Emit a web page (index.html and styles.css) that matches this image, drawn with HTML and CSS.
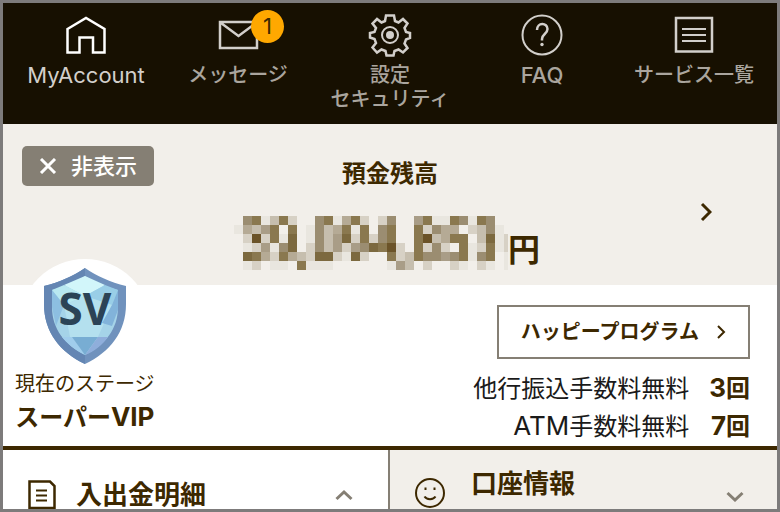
FILE: index.html
```html
<!DOCTYPE html>
<html lang="ja">
<head>
<meta charset="utf-8">
<meta name="viewport" content="width=device-width, initial-scale=1">
<title>MyAccount</title>
<link rel="stylesheet" href="styles.css">
</head>
<body>
<nav class="nav">
  <a class="nav-item current" href="#">
    <svg class="nav-icon" viewBox="0 0 44 44"><path d="M3.500 16 22 5l18.500 11v23.500H29V24.500H15.500v15h-12z" stroke-width="2.500"/></svg>
    <span class="nav-label latin">MyAccount</span>
  </a>
  <a class="nav-item" href="#">
    <svg class="nav-icon" viewBox="0 0 44 44"><path d="M4 9h37v26H4zM5 10l17.500 13L40 10" stroke-width="2.500"/></svg>
    <span class="badge">1</span>
    <span class="nav-label">メッセージ</span>
  </a>
  <a class="nav-item" href="#">
    <svg class="nav-icon" viewBox="0 0 44 44">
      <path d="M18 2.500h8l1 5.500 3.500 1.500 4.500-3.500 4.500 4.500-3 4.500 1.500 4 4 1v5l-4 1.500-1.500 4 3 4.500-4.500 4.500-4.500-3-4 1.500-1 4.500h-7l-1-4.500-4-1.500-4.500 3L4.500 34.500l3.500-4.500-1.500-4-4.500-1.500V20l4.500-1L8 15l-3.500-4.500L9 6l4.500 3.500L17 8z" stroke-width="2.500"/>
      <circle cx="22" cy="22" r="8"/><circle class="solid" cx="22" cy="22" r="4"/>
    </svg>
    <span class="nav-label">設定<br>セキュリティ</span>
  </a>
  <a class="nav-item" href="#">
    <svg class="nav-icon" viewBox="0 0 44 44">
      <circle cx="22" cy="22" r="19.500"/><path d="M17 17c0-8 10.500-7.500 10.500-1 0 5-5.500 5-5.500 10v1.500" stroke-width="2.500"/><circle class="solid" cx="22" cy="31.500" r="1.700"/>
    </svg>
    <span class="nav-label latin">FAQ</span>
  </a>
  <a class="nav-item" href="#">
    <svg class="nav-icon" viewBox="0 0 44 44"><path d="M4 5h36v33.500H4z" stroke-width="2.500"/><path d="M10 16h24M10 22h24M10 28h24"/></svg>
    <span class="nav-label">サービス一覧</span>
  </a>
</nav>

<section class="balance">
  <button class="hide" type="button">
    <svg viewBox="0 0 18 16" width="18" height="16"><path d="M2 1l14 14M16 1 2 15"/></svg>
    非表示
  </button>
  <div class="balance-body">
    <h2 class="balance-title">預金残高</h2>
    <p class="amount"><svg id="mosaic" class="mosaic" viewBox="0 0 274 54"></svg><span class="yen">円</span></p>
  </div>
  <a class="more" href="#" aria-label="預金残高">
    <svg viewBox="0 0 12 20" width="12" height="20"><path d="M2 2l8 8-8 8"/></svg>
  </a>
</section>

<section class="stage">
  <div class="rank">
    <svg class="emblem" viewBox="0 0 132 110">
      <circle cx="66" cy="66" r="66" fill="#fff"/>
      <path d="M66 9c12 8 25 14 41 18v18c0 28-16 48-41 60C41 93 25 73 25 45V27C41 23 54 17 66 9z" fill="#7092bd"/>
      <path d="M66 9v96C41 93 25 73 25 45V27C41 23 54 17 66 9z" fill="#6486b3"/>
      <path d="M66 17c10 7 21 11 33 14v17c0 22-13 38-33 48-20-10-33-26-33-48V31c12-3 23-7 33-14z" fill="#a5d3e8"/>
      <path d="M66 17 86 26 66 37 45 26z" fill="#d2f6fa"/>
      <path d="M33 31l12-5 21 11-21 9z" fill="#b9e8f0"/>
      <path d="M86 26l13 5-6 15-27-9z" fill="#99cee7"/>
      <path d="M33 31l12 15-8 21-4-19z" fill="#8dbfe1"/>
      <path d="M45 46l21-9 27 9-14 32H51z" fill="#b4e0ee"/>
      <path d="M99 31v20l-6 16-10-3 10-18z" fill="#82b3da"/>
      <path d="M43 78h10l13 18c-10-5-17-11-23-18z" fill="#a0cdec"/>
      <path d="M53 78h26L66 96z" fill="#78add3"/>
      <path d="M79 78h10c-6 8-13 14-23 18z" fill="#8faedb"/>
      <text x="66" y="66">SV</text>
    </svg>
    <p class="rank-label">現在のステージ</p>
    <p class="rank-name">スーパー<span class="latin">VIP</span></p>
  </div>
  <div class="perks">
    <a class="program" href="#">ハッピープログラム
      <svg viewBox="0 0 10 16" width="10" height="16"><path d="M2 2l6 6-6 6"/></svg>
    </a>
    <dl class="fees">
      <dt>他行振込手数料無料</dt><dd><span class="latin">3</span>回</dd>
      <dt><span class="latin">ATM</span>手数料無料</dt><dd><span class="latin">7</span>回</dd>
    </dl>
  </div>
</section>

<div class="tabs">
  <button class="tab open" type="button">
    <svg viewBox="0 0 28 30" width="28" height="30"><path d="M1.500 1.500H22L26.500 6v22h-25z" stroke-width="2.500"/><path d="M8 10.500h11M8 15.500h11M8 20.500h11"/></svg>
    <span class="tab-title">入出金明細</span>
    <svg class="arrow" viewBox="0 0 18 12" width="18" height="12"><path d="M1.500 10 9 3l7.500 7"/></svg>
  </button>
  <button class="tab" type="button">
    <svg viewBox="0 0 30 30" width="30" height="30"><circle cx="15" cy="15" r="14"/><path d="M9.500 18.500c2 3.500 9 3.500 11 0"/><path d="M10.500 9.500v2.500M19.500 9.500v2.500"/></svg>
    <span class="tab-title raised">口座情報</span>
    <svg class="arrow" viewBox="0 0 18 18" width="18" height="18"><path d="M1.500 9 9 16l7.500-7"/></svg>
  </button>
</div>
<script src="mosaic.js"></script>
</body>
</html>
```
FILE: styles.css
```css
* {
  box-sizing: border-box;
}

body {
  display: flex;
  flex-direction: column;
  height: 100vh;
  margin: 0;
  overflow: hidden;
  border: 3px solid #7d7b7b;
  background: #fff;
  color: #3d2800;
  font-family: Inter, "Noto Sans CJK JP", sans-serif;
}

h2, p, dl, dd {
  margin: 0;
}

a {
  color: inherit;
  text-decoration: none;
}

button {
  border: 0;
  color: inherit;
  font: inherit;
}

svg {
  flex: none;
  fill: none;
  stroke: currentColor;
  stroke-width: 2;
}

.nav {
  display: grid;
  grid-template-columns: repeat(5, 1fr);
  flex: none;
  padding: 10px 7px 13px;
  background: #171001;
  color: #d2cfcb;
}

.nav-item {
  position: relative;
  display: flex;
  flex-direction: column;
  align-items: center;
}

.nav-icon {
  width: 44px;
  height: 44px;
  margin-bottom: 6px;
}

.nav-icon .solid {
  fill: currentColor;
  stroke: none;
}

.nav-label {
  color: #aaa59e;
  font-size: 20px;
  font-weight: 500;
  line-height: 24px;
  text-align: center;
}

.nav-label.latin {
  font-size: 22px;
}

.current {
  color: #fff;
}

.current .nav-label {
  color: #d2cfcb;
  font-weight: 400;
}

.badge {
  position: absolute;
  top: -3px;
  left: calc(50% + 13px);
  width: 33px;
  height: 33px;
  border-radius: 50%;
  background: #ffa800;
  color: #3d2800;
  font-size: 22px;
  line-height: 33px;
  text-align: center;
}

.balance {
  display: grid;
  grid-template-columns: 1fr auto 1fr;
  flex: none;
  padding: 22px 19px 15px;
  background: #f2efea;
}

.hide {
  display: flex;
  align-items: center;
  justify-content: center;
  gap: 14px;
  width: 132px;
  height: 40px;
  padding: 0;
  border-radius: 5px;
  background: #857f74;
  color: #fff;
  font-size: 22px;
  font-weight: 500;
  line-height: 32px;
}

.hide svg {
  stroke-width: 3;
}

.balance-body {
  padding-top: 12px;
}

.balance-title {
  font-size: 24px;
  line-height: 32px;
  text-align: center;
}

.amount {
  display: flex;
  align-items: flex-end;
  margin-top: 26px;
  padding-right: 6px;
}

.mosaic {
  width: 274px;
  height: 54px;
  stroke: none;
}

.yen {
  font-size: 32px;
  font-weight: 700;
  line-height: 40px;
}

.more {
  align-self: center;
  justify-self: end;
  padding: 12px 46px 0 0;
}

.more svg {
  stroke-width: 3;
}

.stage {
  display: flex;
  justify-content: space-between;
  flex: none;
  padding: 0 27px 0 12px;
  border-bottom: 4px solid #3d2800;
}

.rank {
  display: flex;
  flex-direction: column;
  align-items: center;
  margin-top: -26px;
  padding-bottom: 8px;
}

.emblem {
  width: 132px;
  height: 110px;
  stroke: none;
}

.emblem text {
  fill: #2b4356;
  font-family: "Noto Sans", sans-serif;
  font-size: 44px;
  font-weight: 700;
  text-anchor: middle;
}

.rank-label {
  margin-top: 1px;
  font-size: 20px;
  line-height: 28px;
}

.rank-name {
  font-size: 24px;
  font-weight: 700;
  line-height: 40px;
}

.rank-name .latin,
.fees .latin {
  font-size: 26px;
  line-height: 1;
}

.perks {
  display: flex;
  flex-direction: column;
  align-items: flex-end;
  padding-top: 20px;
}

.program {
  display: flex;
  align-items: center;
  gap: 17px;
  height: 54px;
  margin-bottom: 11px;
  padding: 0 22px;
  border: 2px solid #857f74;
  font-size: 20px;
  font-weight: 700;
  line-height: 28px;
}

.fees {
  display: grid;
  grid-template-columns: auto auto;
  column-gap: 20px;
  font-size: 24px;
  line-height: 38px;
  text-align: right;
}

.fees dt {
  color: #1a1a1a;
}

.fees dd {
  font-weight: 700;
}

.tabs {
  display: grid;
  grid-template-columns: 1fr 1fr;
  flex: 1;
  min-height: 0;
  overflow: hidden;
}

.tab {
  display: flex;
  align-items: center;
  align-self: start;
  gap: 20px;
  height: 90px;
  padding: 0 35px 0 25px;
  border-right: 2px solid #857f74;
  background: #fff;
}

.tab + .tab {
  gap: 26px;
  padding: 0 33px 4px 25px;
  border-right: 0;
  background: #f2efea;
}

.tab-title {
  font-size: 26px;
  font-weight: 700;
  line-height: 38px;
}

.raised {
  padding-bottom: 18px;
}

.arrow {
  margin-left: auto;
  color: #857f74;
  stroke-width: 3;
}
```
FILE: mosaic.js
```js
// Masked balance: each digit is the shade of one 9px cell, 0 is clear.
const rows = [
  "0671372006714720260057117617600",
  "1435707016347170670072644023610",
  "0292718016358272670079347703812",
  "0125168026352568792072620712712",
  "0874274328821820072376656716701",
  "0120110711100000015302002102101"
];
const shades = ["", "#e9e6df", "#d7d1c5", "#c6beae", "#b5aa95", "#a99d87", "#9b8d71", "#8a784f", "#7c693f", "#6b5328"];
const svg = document.getElementById("mosaic");
rows.forEach((row, y) => {
  [...row].forEach((level, x) => {
    if (level === "0") return;
    const cell = document.createElementNS("http://www.w3.org/2000/svg", "rect");
    cell.setAttribute("x", x * 9);
    cell.setAttribute("y", y * 9);
    cell.setAttribute("width", 9);
    cell.setAttribute("height", 9);
    cell.setAttribute("fill", shades[level]);
    svg.append(cell);
  });
});
```
